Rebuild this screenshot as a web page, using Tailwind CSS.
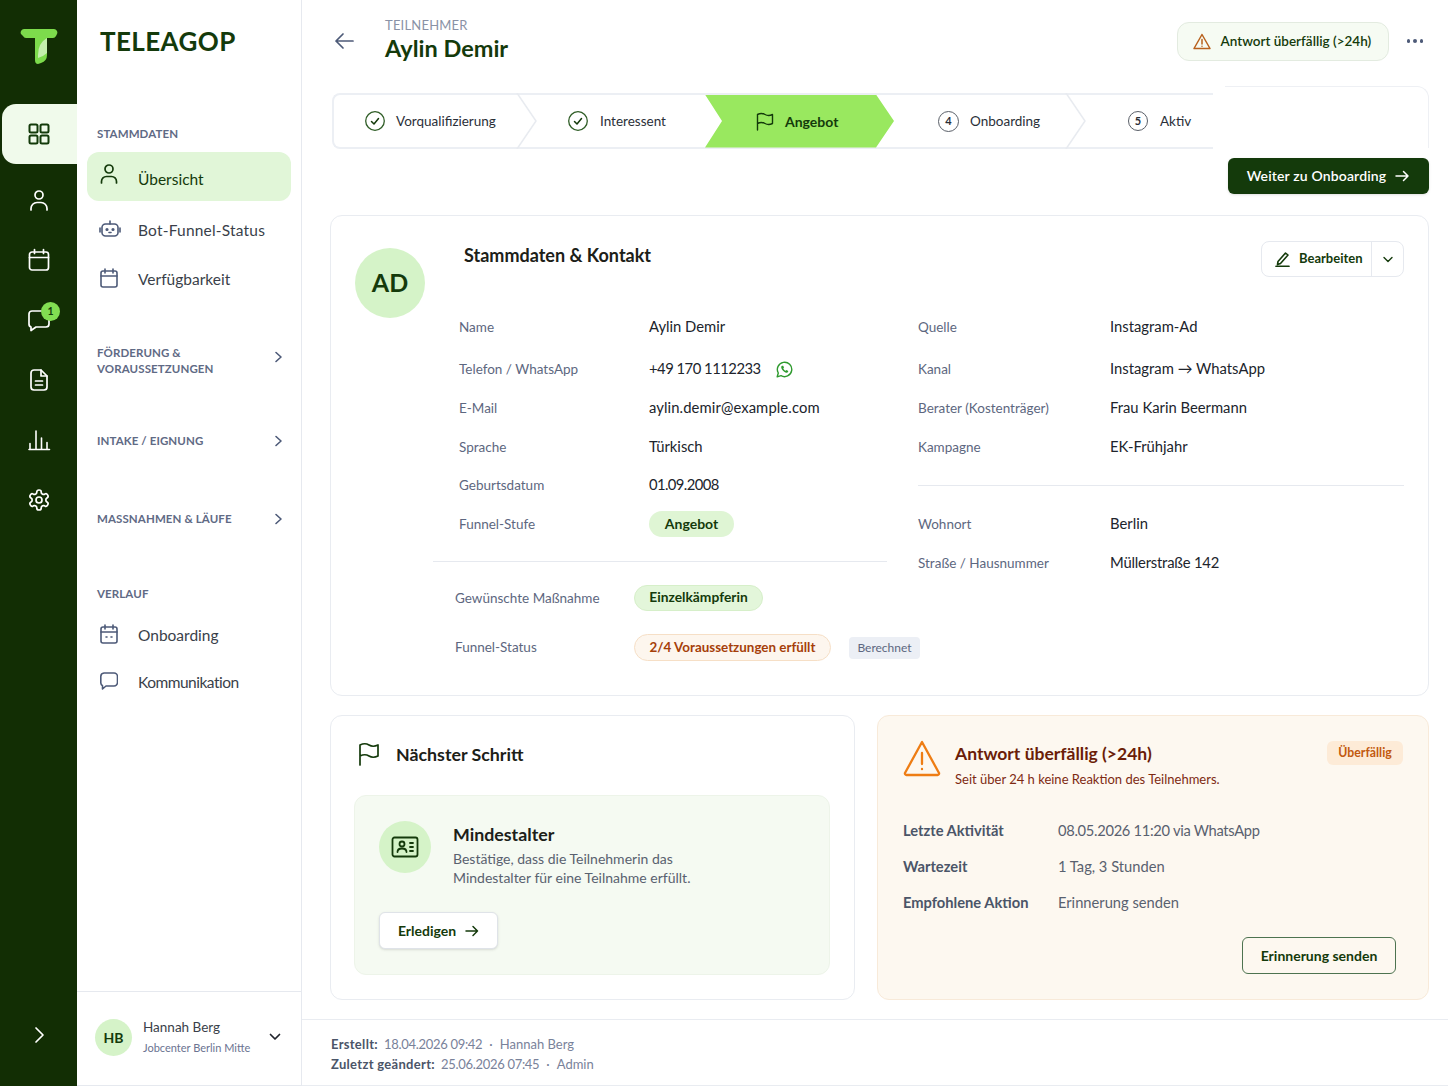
<!DOCTYPE html>
<html lang="de">
<head>
<meta charset="UTF-8">
<meta name="viewport" content="width=device-width, initial-scale=1.0">
<title>Aylin Demir</title>
<script src="https://cdn.jsdelivr.net/npm/@tailwindcss/browser@4"></script>
</head>
<body class="bg-white font-['Lato',sans-serif] text-[#20242c]">
<div class="flex w-[1448px] h-[1086px] overflow-hidden">

  <!-- icon rail -->
  <nav class="w-[77px] shrink-0 bg-[#122e04] flex flex-col text-white">
    <div class="h-[104px] pt-[28px] pl-[20px]">
      <svg width="38" height="36" viewBox="0 0 38 36"><path d="M4 1h30a3.500 3.500 0 0 1 3 5l-1 2a4 4 0 0 1-3 2h-6v17q0 6-6 8l-3 1q-3 0-3-4V10H6a4 4 0 0 1-3-2L1 6a3.500 3.500 0 0 1 3-5z" fill="#7ddb4c"/><path d="M18 27q0-12 9-17v15q-3 3-9 5z" fill="#c4efad"/></svg>
    </div>
    <div class="ml-[2px] h-[60px] rounded-l-[14px] bg-[#f0faeb] flex items-center justify-center pr-[2px]">
      <svg width="24" height="24" viewBox="0 0 24 24" fill="none" stroke="#133a0a" stroke-width="2"><rect x="2.500" y="2.500" width="8" height="8" rx="1.500"/><rect x="13.500" y="2.500" width="8" height="8" rx="1.500"/><rect x="2.500" y="13.500" width="8" height="8" rx="1.500"/><rect x="13.500" y="13.500" width="8" height="8" rx="1.500"/></svg>
    </div>
    <div class="mt-[6px] h-[60px] flex items-center justify-center">
      <svg width="24" height="24" viewBox="0 0 24 24" fill="none" stroke="currentColor" stroke-width="1.700" stroke-linecap="round"><circle cx="12" cy="7" r="4"/><path d="M4 22v-1.500a6 6 0 0 1 6-6h4a6 6 0 0 1 6 6V22"/></svg>
    </div>
    <div class="h-[60px] flex items-center justify-center">
      <svg width="24" height="24" viewBox="0 0 24 24" fill="none" stroke="currentColor" stroke-width="1.700" stroke-linecap="round"><rect x="2.500" y="4" width="19" height="18" rx="2.500"/><path d="M2.500 9.500h19M7.500 1.500v4M16.500 1.500v4"/></svg>
    </div>
    <div class="h-[60px] flex items-center justify-center relative">
      <svg width="24" height="24" viewBox="0 0 24 24" fill="none" stroke="currentColor" stroke-width="1.700" stroke-linejoin="round"><path d="M5 3h14a3 3 0 0 1 3 3v10a3 3 0 0 1-3 3H9l-5 3.500V19a3 3 0 0 1-2-3V6a3 3 0 0 1 3-3z"/></svg>
      <span class="absolute left-[41px] top-[12px] w-[19px] h-[19px] rounded-full bg-[#82dd52] text-[#133a0a] text-[10.500px] font-bold flex items-center justify-center">1</span>
    </div>
    <div class="h-[60px] flex items-center justify-center">
      <svg width="24" height="24" viewBox="0 0 24 24" fill="none" stroke="currentColor" stroke-width="1.700" stroke-linecap="round" stroke-linejoin="round"><path d="M14 2H7a3 3 0 0 0-3 3v14a3 3 0 0 0 3 3h10a3 3 0 0 0 3-3V8z"/><path d="M14 2v6h6M8.500 13h7M8.500 17h7"/></svg>
    </div>
    <div class="h-[60px] flex items-center justify-center">
      <svg width="24" height="24" viewBox="0 0 24 24" fill="none" stroke="currentColor" stroke-width="1.600" stroke-linecap="round"><path d="M2 21.500h20.500M3 21.500v-6M9 21.500V3M14.500 21.500V10M20 21.500v-7"/></svg>
    </div>
    <div class="h-[60px] flex items-center justify-center">
      <svg width="24" height="24" viewBox="0 0 24 24" fill="none" stroke="currentColor" stroke-width="1.700"><path d="M12.220 2h-.44a2 2 0 0 0-2 2v.18a2 2 0 0 1-1 1.730l-.43.25a2 2 0 0 1-2 0l-.15-.08a2 2 0 0 0-2.730.73l-.22.38a2 2 0 0 0 .73 2.730l.15.1a2 2 0 0 1 1 1.720v.51a2 2 0 0 1-1 1.740l-.15.09a2 2 0 0 0-.73 2.730l.22.38a2 2 0 0 0 2.730.73l.15-.08a2 2 0 0 1 2 0l.43.25a2 2 0 0 1 1 1.730V20a2 2 0 0 0 2 2h.44a2 2 0 0 0 2-2v-.18a2 2 0 0 1 1-1.730l.43-.25a2 2 0 0 1 2 0l.15.08a2 2 0 0 0 2.730-.73l.22-.39a2 2 0 0 0-.73-2.730l-.15-.08a2 2 0 0 1-1-1.740v-.5a2 2 0 0 1 1-1.740l.15-.09a2 2 0 0 0 .73-2.730l-.22-.38a2 2 0 0 0-2.730-.73l-.15.08a2 2 0 0 1-2 0l-.43-.25a2 2 0 0 1-1-1.730V4a2 2 0 0 0-2-2z"/><circle cx="12" cy="12" r="3"/></svg>
    </div>
    <div class="mt-auto h-[102px] flex items-start justify-center pt-[42px]">
      <svg width="16" height="18" viewBox="0 0 16 18" fill="none" stroke="currentColor" stroke-width="1.700" stroke-linecap="round" stroke-linejoin="round"><path d="M5 2l7 7-7 7"/></svg>
    </div>
  </nav>

  <!-- section sidebar -->
  <aside class="w-[225px] shrink-0 border-r border-[#e6e9ef] flex flex-col">
    <div class="pl-[23px] pt-[25px] h-[57px] text-[26px] leading-[32px] font-bold tracking-[0.4px] text-[#143a0b]">TELEAGOP</div>
    <div class="mt-[69px] pl-[20px] h-[16px] text-[11.500px] leading-[16px] font-bold tracking-[0.1px] text-[#5f6a85]">STAMMDATEN</div>
    <a class="mt-[10px] ml-[10px] w-[204px] h-[49px] rounded-xl bg-[#e1f6d8] flex items-center pl-[13px] gap-[20px] text-[15.500px] text-[#143a0b]">
      <svg class="-mt-[5px]" width="18" height="22" viewBox="0 0 18 22" fill="none" stroke="#143a0b" stroke-width="1.700" stroke-linecap="round"><circle cx="9" cy="6" r="4"/><path d="M1.500 20v-1.500a5 5 0 0 1 5-5h5a5 5 0 0 1 5 5V20"/></svg>
      <span class="mt-[6px]">Übersicht</span>
    </a>
    <a class="mt-[5px] ml-[10px] w-[204px] h-[49px] flex items-center pl-[12px] gap-[17px] text-[15.500px] text-[#3a3f4a]">
      <svg class="-mt-[3px]" width="22" height="20" viewBox="0 0 22 20" fill="none" stroke="#4d5a78" stroke-width="1.600" stroke-linecap="round"><rect x="3" y="5" width="16" height="12" rx="3.500"/><path d="M11 5V2M1 9v4M21 9v4"/><circle cx="8" cy="10.500" r=".8" fill="#4d5a78"/><circle cx="14" cy="10.500" r=".8" fill="#4d5a78"/><path d="M10 13.500h2"/></svg>
      <span class="tracking-[0.2px]">Bot-Funnel-Status</span>
    </a>
    <a class="ml-[10px] w-[204px] h-[49px] flex items-center pl-[13px] gap-[20px] text-[15.500px] text-[#3a3f4a]">
      <svg class="-mt-[3px]" width="18" height="20" viewBox="0 0 18 20" fill="none" stroke="#4d5a78" stroke-width="1.600" stroke-linecap="round"><rect x="1" y="3" width="16" height="16" rx="2"/><path d="M1 8h16M5 1v4M13 1v4"/></svg>
      <span>Verfügbarkeit</span>
    </a>
    <div class="mt-[41px] pl-[20px] pr-[18px] flex justify-between items-center text-[11.500px] leading-[16px] font-bold tracking-[0.1px] text-[#5f6a85]">
      <span>FÖRDERUNG &amp;<br>VORAUSSETZUNGEN</span>
      <svg class="-mt-[8px]" width="9" height="12" viewBox="0 0 9 12" fill="none" stroke="#4d5a78" stroke-width="1.600" stroke-linecap="round" stroke-linejoin="round"><path d="M2 1.500L7 6l-5 4.500"/></svg>
    </div>
    <div class="mt-[56px] pl-[20px] pr-[18px] flex justify-between items-center text-[11.500px] leading-[16px] font-bold tracking-[0.1px] text-[#5f6a85]">
      <span>INTAKE / EIGNUNG</span>
      <svg width="9" height="12" viewBox="0 0 9 12" fill="none" stroke="#4d5a78" stroke-width="1.600" stroke-linecap="round" stroke-linejoin="round"><path d="M2 1.500L7 6l-5 4.500"/></svg>
    </div>
    <div class="mt-[62px] pl-[20px] pr-[18px] flex justify-between items-center text-[11.500px] leading-[16px] font-bold tracking-[0.1px] text-[#5f6a85]">
      <span>MASSNAHMEN &amp; LÄUFE</span>
      <svg width="9" height="12" viewBox="0 0 9 12" fill="none" stroke="#4d5a78" stroke-width="1.600" stroke-linecap="round" stroke-linejoin="round"><path d="M2 1.500L7 6l-5 4.500"/></svg>
    </div>
    <div class="mt-[59px] pl-[20px] h-[16px] text-[11.500px] leading-[16px] font-bold tracking-[0.1px] text-[#5f6a85]">VERLAUF</div>
    <a class="mt-[11px] ml-[10px] h-[46px] flex items-center pl-[13px] gap-[20px] text-[15.500px] text-[#3a3f4a]">
      <svg class="-mt-[4px]" width="18" height="20" viewBox="0 0 18 20" fill="none" stroke="#4d5a78" stroke-width="1.600" stroke-linecap="round"><rect x="1" y="3" width="16" height="16" rx="2"/><path d="M1 8h16M5 1v4M13 1v4M6 13h1M11 13h1"/></svg>
      <span>Onboarding</span>
    </a>
    <a class="mt-[1px] ml-[10px] h-[46px] flex items-center pl-[13px] gap-[20px] text-[15.500px] text-[#3a3f4a]">
      <svg class="-mt-[4px]" width="18" height="20" viewBox="0 0 18 20" fill="none" stroke="#4d5a78" stroke-width="1.600" stroke-linejoin="round"><path d="M4 2h10a3.500 3.500 0 0 1 3.500 3.500v6A3.500 3.500 0 0 1 14 15H6l-3.500 3v-3.300A3.500 3.500 0 0 1 .8 11.500v-6A3.500 3.500 0 0 1 4 2z"/></svg>
      <span class="tracking-[-0.5px]">Kommunikation</span>
    </a>
    <div class="mt-auto h-[95px] border-y border-[#e6e9ef] flex items-center pl-[18px] pr-[20px] pb-[3px]">
      <div class="w-[37px] h-[37px] rounded-full bg-[#d5f3c8] text-[#143a0b] text-[14px] font-bold flex items-center justify-center">HB</div>
      <div class="ml-[11px]">
        <div class="-mt-[1px] text-[13.500px] leading-[18px] text-[#3a3f4a]">Hannah Berg</div>
        <div class="mt-[4px] text-[11px] leading-[16px] text-[#6a7391]">Jobcenter Berlin Mitte</div>
      </div>
      <svg class="ml-auto" width="12" height="8" viewBox="0 0 12 8" fill="none" stroke="#20242c" stroke-width="1.700" stroke-linecap="round" stroke-linejoin="round"><path d="M1.500 1.500L6 6l4.500-4.500"/></svg>
    </div>
  </aside>

  <!-- main -->
  <main class="flex-1 flex flex-col">
    <header class="h-[93px] shrink-0 flex pl-[32px] pr-[25px]">
      <svg class="mt-[32px]" width="20" height="18" viewBox="0 0 20 18" fill="none" stroke="#4d5a78" stroke-width="1.700" stroke-linecap="round" stroke-linejoin="round"><path d="M19 9H2M9 2L2 9l7 7"/></svg>
      <div class="ml-[31px] pt-[17px]">
        <div class="text-[13px] leading-[16px] tracking-[0.2px] text-[#8a92a6]">TEILNEHMER</div>
        <div class="text-[23.500px] leading-[30px] font-bold text-[#143a0b]">Aylin Demir</div>
      </div>
      <div class="ml-auto mt-[22px] h-[39px] w-[212px] rounded-xl border border-[#e3ebe0] bg-[#f6fbf3] flex items-center pl-[15px] gap-[10px] text-[13.500px] font-semibold text-[#143a0b]">
        <svg width="18" height="17" viewBox="0 0 18 17" fill="none" stroke="#b8611d" stroke-width="1.500" stroke-linecap="round" stroke-linejoin="round"><path d="M9 1.500L1 15.500h16zM9 6.500v4.500M9 13.200v.1"/></svg>
        <span>Antwort überfällig (&gt;24h)</span>
      </div>
      <div class="ml-[18px] mt-[39px] flex gap-[3px] h-[4px]">
        <span class="w-[3.500px] h-[3.500px] rounded-full bg-[#4d5a78]"></span><span class="w-[3.500px] h-[3.500px] rounded-full bg-[#4d5a78]"></span><span class="w-[3.500px] h-[3.500px] rounded-full bg-[#4d5a78]"></span>
      </div>
    </header>

    <!-- stepper -->
    <div class="flex h-[56px] shrink-0 ml-[30px]">
      <div class="relative w-[881px] h-[56px] flex items-center border-y-2 border-l-2 border-[#eceff4] rounded-l-lg text-[13.500px] text-[#2a2f38]">
        <div class="w-[191px] pl-[31px] flex items-center gap-[11px]">
          <svg width="20" height="20" viewBox="0 0 20 20" fill="none" stroke="#2f5d26" stroke-width="1.300"><circle cx="10" cy="10" r="9.300"/><path d="M6.500 10.500l2.500 2.500 4.500-5.500" stroke="#143a0b" stroke-width="1.500" stroke-linecap="round" stroke-linejoin="round"/></svg>
          <span>Vorqualifizierung</span>
        </div>
        <div class="w-[180px] pl-[43px] flex items-center gap-[12px]">
          <svg width="20" height="20" viewBox="0 0 20 20" fill="none" stroke="#2f5d26" stroke-width="1.300"><circle cx="10" cy="10" r="9.300"/><path d="M6.500 10.500l2.500 2.500 4.500-5.500" stroke="#143a0b" stroke-width="1.500" stroke-linecap="round" stroke-linejoin="round"/></svg>
          <span>Interessent</span>
        </div>
        <div class="w-[190px] h-[53px] pl-[51px] flex items-center gap-[11px] bg-[#99e85f] [clip-path:polygon(0_0,171px_0,189px_50%,171px_100%,0_100%,17px_50%)] text-[14px] font-bold text-[#143a0b]">
          <svg width="18" height="19" viewBox="0 0 18 19" fill="none" stroke="#143a0b" stroke-width="1.400" stroke-linecap="round" stroke-linejoin="round"><path d="M1.500 18V2.500q4-2 7.500 0t7.500 0v9q-4 2-7.500 0t-7.500 0"/></svg>
          <span>Angebot</span>
        </div>
        <div class="w-[181px] pl-[43px] flex items-center gap-[11px]">
          <span class="w-[21px] h-[21px] rounded-full border border-[#5a5f68] flex items-center justify-center text-[11px] font-bold">4</span>
          <span>Onboarding</span>
        </div>
        <div class="pl-[52px] flex items-center gap-[12px]">
          <span class="w-[20px] h-[20px] rounded-full border border-[#5a5f68] flex items-center justify-center text-[11px] font-bold">5</span>
          <span>Aktiv</span>
        </div>
        <svg class="absolute left-[182px] -top-[2px]" width="22" height="56" viewBox="0 0 22 56" fill="none" stroke="#e8ebf0" stroke-width="1.500"><path d="M1 0l19 28L1 56"/></svg>
        <svg class="absolute left-[731px] -top-[2px]" width="22" height="56" viewBox="0 0 22 56" fill="none" stroke="#e8ebf0" stroke-width="1.500"><path d="M1 0l19 28L1 56"/></svg>
      </div>
      <div class="ml-[12px] w-[204px] h-[62px] -mt-[7px] border-t border-r border-[#eef0f4] rounded-tr-xl"></div>
    </div>

    <div class="mt-[9px] h-[36px] shrink-0 flex justify-end pr-[19px]">
      <button class="w-[201px] rounded-md bg-[#143a0b] text-white text-[14px] font-semibold tracking-[0.15px] flex items-center justify-center gap-[9px] shadow-sm">
        <span class="-mt-[1px]">Weiter zu Onboarding</span>
        <svg width="15" height="12" viewBox="0 0 15 12" fill="none" stroke="currentColor" stroke-width="1.500" stroke-linecap="round" stroke-linejoin="round"><path d="M1 6h12M8.500 1.500L13 6l-4.500 4.500"/></svg>
      </button>
    </div>

    <!-- Stammdaten card -->
    <section class="mt-[21px] ml-[28px] mr-[19px] h-[481px] shrink-0 rounded-xl border border-[#e9ecf1] px-[24px] pt-[25px]">
      <div class="flex h-[76px]">
        <div class="mt-[7px] w-[70px] h-[70px] rounded-full bg-[#d5f3c8] text-[#143a0b] text-[25px] font-bold flex items-center justify-center">AD</div>
        <h2 class="ml-[39px] mt-[2px] text-[18px] leading-[24px] font-bold text-[#1c2018]">Stammdaten &amp; Kontakt</h2>
        <div class="ml-auto h-[36px] w-[143px] rounded-lg border border-[#e6e9ef] flex items-center text-[13px] font-bold text-[#143a0b]">
          <div class="flex-1 flex items-center pl-[13px] gap-[9px] h-full">
            <svg width="15" height="16" viewBox="0 0 15 16" fill="none" stroke="#143a0b" stroke-width="1.600" stroke-linecap="round" stroke-linejoin="round"><path d="M3 10.500L10.500 2l2.500 2-7.500 8.500-3 1zM1 15.300h13"/></svg>
            <span>Bearbeiten</span>
          </div>
          <div class="w-[32px] h-full border-l border-[#e6e9ef] flex items-center justify-center">
            <svg width="10" height="7" viewBox="0 0 10 7" fill="none" stroke="#143a0b" stroke-width="1.400" stroke-linecap="round" stroke-linejoin="round"><path d="M1 1.500L5 5.500l4-4"/></svg>
          </div>
        </div>
      </div>
      <div class="flex">
        <div class="w-[454px] ml-[78px] text-[14.800px]">
          <div class="h-[20px] flex items-center"><span class="ml-[26px] w-[190px] text-[13.500px] text-[#5d6780]">Name</span><span class="-mt-[2px]">Aylin Demir</span></div>
          <div class="mt-[22px] h-[20px] flex items-center"><span class="ml-[26px] w-[190px] text-[13.500px] text-[#5d6780]">Telefon / WhatsApp</span><span class="-mt-[2px] tracking-[-0.5px]">+49 170 1112233</span>
            <svg class="ml-[15px]" width="17" height="17" viewBox="0 0 17 17" fill="none"><path d="M1.200 15.800l1.100-3.800a7.200 7.200 0 1 1 2.700 2.700z" stroke="#2e9a2e" stroke-width="1.400" stroke-linejoin="round"/><path d="M6 4.800c-.8.500-1 1.500-.5 2.700.7 1.700 2.200 3.300 4 4 1.100.4 2 .2 2.600-.6l.1-1-1.700-.9-.8.800c-1-.4-1.900-1.300-2.400-2.400l.7-.8-.8-1.800z" fill="#2e9a2e"/></svg>
          </div>
          <div class="mt-[19px] h-[20px] flex items-center"><span class="ml-[26px] w-[190px] text-[13.500px] text-[#5d6780]">E-Mail</span><span class="-mt-[2px] tracking-[0.1px]">aylin.demir@example.com</span></div>
          <div class="mt-[19px] h-[20px] flex items-center"><span class="ml-[26px] w-[190px] text-[13.500px] text-[#5d6780]">Sprache</span><span class="-mt-[2px]">Türkisch</span></div>
          <div class="mt-[18px] h-[20px] flex items-center"><span class="ml-[26px] w-[190px] text-[13.500px] text-[#5d6780]">Geburtsdatum</span><span class="-mt-[2px] tracking-[-0.6px]">01.09.2008</span></div>
          <div class="mt-[19px] h-[20px] flex items-center"><span class="ml-[26px] w-[190px] text-[13.500px] text-[#5d6780]">Funnel-Stufe</span>
            <span class="h-[26px] w-[85px] rounded-full bg-[#dff5d4] flex items-center justify-center text-[14px] font-bold text-[#143a0b] pb-[1px]">Angebot</span>
          </div>
          <div class="mt-[27px] border-t border-[#e6e9ef]"></div>
          <div class="mt-[23px] h-[26px] flex items-center"><span class="ml-[22px] w-[179px] shrink-0 text-[13.500px] text-[#5d6780]">Gewünschte Maßnahme</span>
            <span class="h-[26px] w-[129px] shrink-0 rounded-full bg-[#e3f6da] border border-[#d6efc9] flex items-center justify-center text-[13.800px] font-bold text-[#143a0b] pb-[1px]">Einzelkämpferin</span>
          </div>
          <div class="mt-[23px] h-[27px] flex items-center"><span class="ml-[22px] w-[179px] shrink-0 text-[13.500px] text-[#5d6780]">Funnel-Status</span>
            <span class="h-[27px] w-[197px] shrink-0 rounded-full bg-[#fdf6ee] border border-[#f6dfc6] flex items-center justify-center text-[13.400px] font-bold text-[#a63f0a]">2/4 Voraussetzungen erfüllt</span>
            <span class="ml-[18px] h-[22px] w-[71px] shrink-0 rounded bg-[#eceff5] flex items-center justify-center text-[12px] text-[#5d6780]">Berechnet</span>
          </div>
        </div>
        <div class="ml-[31px] flex-1 text-[14.800px]">
          <div class="h-[20px] flex items-center"><span class="w-[192px] text-[13.500px] text-[#5d6780]">Quelle</span><span class="-mt-[2px]">Instagram-Ad</span></div>
          <div class="mt-[22px] h-[20px] flex items-center"><span class="w-[192px] text-[13.500px] text-[#5d6780]">Kanal</span><span class="-mt-[2px]">Instagram → WhatsApp</span></div>
          <div class="mt-[19px] h-[20px] flex items-center"><span class="w-[192px] text-[13.500px] text-[#5d6780]">Berater (Kostenträger)</span><span class="-mt-[2px]">Frau Karin Beermann</span></div>
          <div class="mt-[19px] h-[20px] flex items-center"><span class="w-[192px] text-[13.500px] text-[#5d6780]">Kampagne</span><span class="-mt-[2px]">EK-Frühjahr</span></div>
          <div class="mt-[28px] border-t border-[#e6e9ef]"></div>
          <div class="mt-[28px] h-[20px] flex items-center"><span class="w-[192px] text-[13.500px] text-[#5d6780]">Wohnort</span><span class="-mt-[2px]">Berlin</span></div>
          <div class="mt-[19px] h-[20px] flex items-center"><span class="w-[192px] text-[13.500px] text-[#5d6780]">Straße / Hausnummer</span><span class="-mt-[2px] tracking-[-0.2px]">Müllerstraße 142</span></div>
        </div>
      </div>
    </section>

    <!-- bottom cards -->
    <div class="mt-[19px] ml-[28px] mr-[19px] h-[285px] shrink-0 flex gap-[22px]">
      <section class="w-[525px] rounded-xl border border-[#e9ecf1] pl-[23px] pr-[24px] pt-[26px]">
        <div class="flex items-center h-[24px] gap-[16px] pl-[4px]">
          <svg width="22" height="24" viewBox="0 0 22 24" fill="none" stroke="#143a0b" stroke-width="1.700" stroke-linecap="round" stroke-linejoin="round"><path d="M2 23V3q5-2.500 9 0t9 0v11q-5 2.500-9 0t-9 0"/></svg>
          <h3 class="text-[17.800px] font-bold text-[#1c2018]">Nächster Schritt</h3>
        </div>
        <div class="mt-[29px] h-[180px] rounded-xl bg-[#f5faf2] border border-[#edf4e9] pl-[24px] pt-[25px]">
          <div class="flex">
            <div class="w-[52px] h-[52px] rounded-full bg-[#d5f3c8] flex items-center justify-center">
              <svg width="28" height="22" viewBox="0 0 28 22" fill="none" stroke="#143a0b" stroke-width="1.800" stroke-linecap="round"><rect x="1.500" y="1.500" width="25" height="19" rx="2"/><circle cx="11" cy="8" r="2.500"/><path d="M6.500 16q0-3.500 4.500-3.500t4.500 3.500M19 7h3M19 11h3M19 15h3"/></svg>
            </div>
            <div class="ml-[22px] mt-[1px]">
              <div class="text-[17.800px] leading-[24px] font-bold text-[#1c2018]">Mindestalter</div>
              <p class="mt-[3px] text-[14px] leading-[19px] text-[#59616f]">Bestätige, dass die Teilnehmerin das<br>Mindestalter für eine Teilnahme erfüllt.</p>
            </div>
          </div>
          <button class="mt-[25px] h-[37px] w-[119px] rounded-md bg-white border border-[#dfe3e8] shadow-sm text-[14px] font-bold text-[#143a0b] flex items-center justify-center gap-[9px]">
            <span>Erledigen</span>
            <svg width="14" height="12" viewBox="0 0 14 12" fill="none" stroke="#143a0b" stroke-width="1.500" stroke-linecap="round" stroke-linejoin="round"><path d="M1 6h11.500M8 1.500L12.500 6 8 10.500"/></svg>
          </button>
        </div>
      </section>
      <section class="flex-1 rounded-xl border border-[#f8ead9] bg-[#fdf8f0] pl-[25px] pr-[25px] pt-[24px]">
        <div class="flex">
          <svg width="38" height="37" viewBox="0 0 38 37" fill="none" stroke="#ee7d14" stroke-width="2.300" stroke-linecap="round" stroke-linejoin="round"><path d="M19 2L2 33a1.500 1.500 0 0 0 1.500 2h31a1.500 1.500 0 0 0 1.500-2zM19 13v11M19 29v.2"/></svg>
          <div class="ml-[14px]">
            <div class="mt-[1px] text-[17.500px] leading-[26px] font-bold text-[#6b1d08]">Antwort überfällig (&gt;24h)</div>
            <div class="mt-[3px] text-[13px] leading-[18px] text-[#7d2a12]">Seit über 24 h keine Reaktion des Teilnehmers.</div>
          </div>
          <span class="ml-auto h-[24px] w-[76px] mt-[1px] rounded-md bg-[#fdebd7] text-[12.300px] font-bold text-[#c2590f] flex items-center justify-center">Überfällig</span>
        </div>
        <div class="mt-[32px] text-[14.700px] text-[#59616f]">
          <div class="flex h-[20px] items-center"><span class="w-[155px] font-bold text-[#4b5568]">Letzte Aktivität</span><span class="tracking-[-0.3px]">08.05.2026 11:20 via WhatsApp</span></div>
          <div class="mt-[16px] flex h-[20px] items-center"><span class="w-[155px] font-bold text-[#4b5568]">Wartezeit</span><span>1 Tag, 3 Stunden</span></div>
          <div class="mt-[16px] flex h-[20px] items-center"><span class="w-[155px] font-bold text-[#4b5568]">Empfohlene Aktion</span><span>Erinnerung senden</span></div>
        </div>
        <div class="mt-[25px] flex justify-end pr-[7px]">
          <button class="h-[37px] w-[154px] rounded-md border border-[#4d7350] text-[14px] font-bold text-[#143a0b]">Erinnerung senden</button>
        </div>
      </section>
    </div>

    <footer class="mt-[19px] flex-1 border-y border-[#e9ecf1] pl-[29px] pt-[14px] text-[13px] leading-[20px] text-[#79829a]">
      <div><span class="font-bold tracking-[0.3px] text-[#4b5568]">Erstellt:</span><span class="ml-[6px] tracking-[-0.3px]">18.04.2026 09:42</span><span class="mx-[7px]">·</span><span>Hannah Berg</span></div>
      <div><span class="font-bold tracking-[0.3px] text-[#4b5568]">Zuletzt geändert:</span><span class="ml-[6px] tracking-[-0.3px]">25.06.2026 07:45</span><span class="mx-[7px]">·</span><span>Admin</span></div>
    </footer>
  </main>
</div>
</body>
</html>
